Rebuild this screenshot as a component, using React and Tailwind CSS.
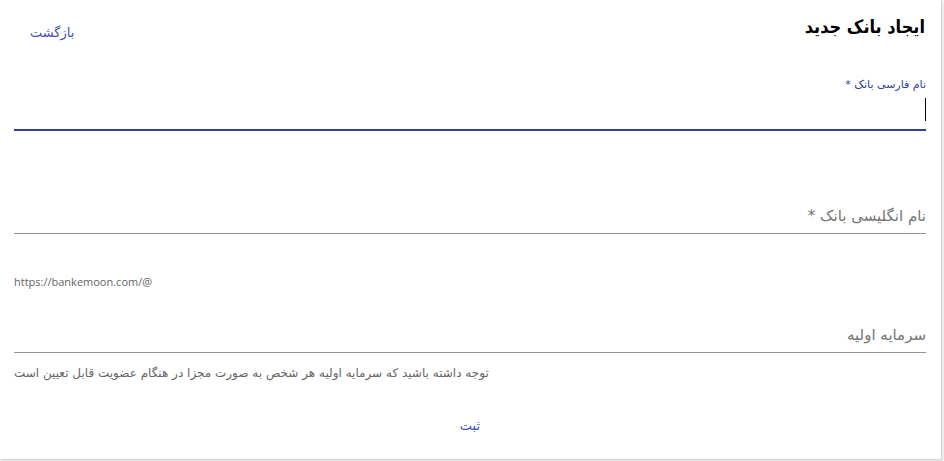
import React from "react";

const persian = { fontFamily: '"DejaVu Sans", "Noto Sans", sans-serif' };

function Field({ label, focused, helper, helperLtr }) {
  return (
    <div className="flex flex-col">
      <div className="relative h-[55px]">
        {focused ? (
          <>
            <div className="absolute right-0 top-[2px] text-[11px] leading-[14px] text-[#303f9f]">{label}</div>
            <div className="absolute right-0 top-[22px] h-[23px] w-px bg-black" />
            <div className="absolute bottom-0 left-0 right-0 h-[2px] bg-[#303f9f]" />
          </>
        ) : (
          <>
            <div className="absolute right-0 top-[27px] text-[15px] leading-[20px] text-[#757575]">{label}</div>
            <div className="absolute bottom-0 left-0 right-0 h-px bg-[#949494]" />
          </>
        )}
      </div>
      {helper ? (
        helperLtr ? (
          <div dir="ltr" className="mt-[41px] text-left font-['Open_Sans'] text-[11px] leading-[14px] text-[#666]">
            {helper}
          </div>
        ) : (
          <div className="mt-[13px] text-left text-[12px] leading-[15px] text-[#666]">{helper}</div>
        )
      ) : null}
    </div>
  );
}

export default function App() {
  return (
    <div className="h-[461px] w-[944px] overflow-hidden bg-white" style={persian}>
      <div className="h-[460px] w-[942px] border-r border-b border-[#d8d8d8] shadow-[1px_1px_2px_rgba(0,0,0,0.15)]">
        <div dir="rtl" className="flex flex-col pl-[14px] pr-[15px]">
          <div className="flex items-start justify-between pt-[13px]">
            <h1 className="mr-[1px] font-['DejaVu_Sans_Condensed','DejaVu_Sans',sans-serif] text-[18px] font-bold leading-[28px] text-black">
              ایجاد بانک جدید
            </h1>
            <button type="button" className="ml-[2px] mt-[7px] px-[14px] py-[4px] text-[13px] leading-[18px] text-[#3f51b5]">
              بازگشت
            </button>
          </div>

          <div className="mt-[30px]">
            <Field label="نام فارسی بانک *" focused />
          </div>

          <div className="mt-[48px]">
            <Field label="نام انگلیسی بانک *" helper="https://bankemoon.com/@" helperLtr />
          </div>

          <div className="mt-[9px]">
            <Field
              label="سرمایه اولیه"
              helper="توجه داشته باشید که سرمایه اولیه هر شخص به صورت مجزا در هنگام عضویت قابل تعیین است"
            />
          </div>

          <div className="mt-[32px] flex justify-center">
            <button type="button" className="px-[16px] py-[4px] text-[13px] leading-[18px] text-[#3f51b5]">
              ثبت
            </button>
          </div>
        </div>
      </div>
    </div>
  );
}
